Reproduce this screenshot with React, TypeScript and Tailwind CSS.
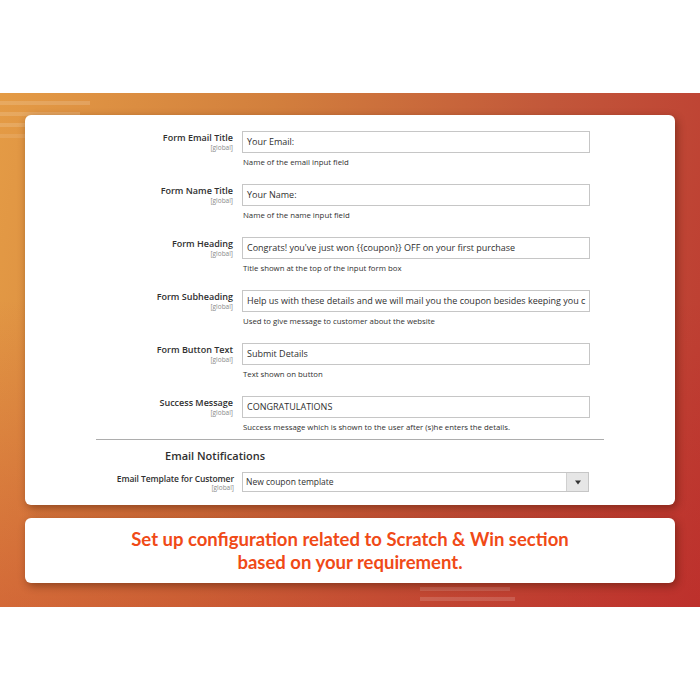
import React from "react";

const rows = [
  { label: "Form Email Title", value: "Your Email:", help: "Name of the email input field" },
  { label: "Form Name Title", value: "Your Name:", help: "Name of the name input field" },
  { label: "Form Heading", value: "Congrats! you've just won {{coupon}} OFF on your first purchase", help: "Title shown at the top of the input form box" },
  { label: "Form Subheading", value: "Help us with these details and we will mail you the coupon besides keeping you c", help: "Used to give message to customer about the website" },
  { label: "Form Button Text", value: "Submit Details", help: "Text shown on button" },
  { label: "Success Message", value: "CONGRATULATIONS", help: "Success message which is shown to the user after (s)he enters the details." },
];

export default function App() {
  return (
    <div className="w-[700px] h-[700px] bg-white overflow-hidden" style={{ fontFamily: "'Open Sans', 'Liberation Sans', sans-serif" }}>
      <div className="relative mt-[93px] h-[514px] bg-[linear-gradient(100deg,#e49b45_0%,#d27f3d_35%,#c2573a_70%,#bd3a31_100%)] px-[25px] pt-[22px] overflow-hidden">
        <div className="absolute inset-0 bg-[linear-gradient(180deg,rgba(0,0,0,0)_40%,rgba(190,30,35,0.35)_100%)]" />
        <div className="absolute left-0 top-[8px] flex flex-col gap-[7px]">
          <div className="h-[4px] w-[90px] bg-white/15" />
          <div className="h-[4px] w-[80px] bg-white/15" />
          <div className="h-[4px] w-[70px] bg-white/15" />
          <div className="h-[4px] w-[60px] bg-white/10" />
        </div>
        <div className="absolute left-[420px] bottom-[6px] flex flex-col gap-[6px]">
          <div className="h-[4px] w-[90px] bg-white/15" />
          <div className="h-[4px] w-[95px] bg-white/15" />
        </div>
        <div className="relative flex flex-col gap-[13px]">
          <div className="h-[390px] rounded-[6px] bg-white shadow-[2px_3px_8px_rgba(60,20,0,0.45)] pt-[16px]">
            {rows.map((r) => (
              <div key={r.label} className="flex h-[53px]">
                <div className="w-[209px] flex flex-col items-end pt-[1px] pr-[1px]">
                  <div className="text-[9px] leading-[12px] font-semibold text-[#303030]">{r.label}</div>
                  <div className="text-[6.5px] leading-[8px] text-[#8a8a8a]">[global]</div>
                </div>
                <div className="ml-[8px] w-[348px]">
                  <div className="h-[22px] border border-[#c6c6c6] flex items-center pl-[4px] overflow-hidden whitespace-nowrap text-[9px] text-[#303030]">
                    {r.value}
                  </div>
                  <div className="mt-[4px] text-[7.8px] leading-[10px] text-[#303030] pl-[1px]">{r.help}</div>
                </div>
              </div>
            ))}
            <div className="mx-[71px] mt-[-10px] border-t border-[#adadad]" />
            <div className="ml-[140px] mt-[9px] text-[11px] leading-[14px] font-semibold text-[#303030]">Email Notifications</div>
            <div className="flex mt-[9px]">
              <div className="w-[209px] flex flex-col items-end pt-[1px]">
                <div className="text-[8.5px] leading-[11px] font-semibold text-[#303030] tracking-[-0.1px]">Email Template for Customer</div>
                <div className="text-[6.5px] leading-[8px] text-[#8a8a8a]">[global]</div>
              </div>
              <div className="ml-[8px] w-[347px] h-[20px] border border-[#c6c6c6] flex">
                <div className="flex-1 flex items-center pl-[3px] text-[8.5px] text-[#303030]">New coupon template</div>
                <div className="w-[22px] bg-[#e6e6e6] border-l border-[#d0d0d0] flex items-center justify-center">
                  <svg width="6" height="5" viewBox="0 0 6 5"><path d="M0 0.5 H6 L3 4.5 Z" fill="#333" /></svg>
                </div>
              </div>
            </div>
          </div>
          <div className="h-[65px] rounded-[6px] bg-white shadow-[2px_3px_8px_rgba(60,20,0,0.45)] flex flex-col items-center justify-center">
            <div className="text-[18.5px] leading-[23px] font-bold text-[#f04a17] text-center" style={{ fontFamily: "Lato, 'Open Sans', sans-serif" }}>
              Set up configuration related to Scratch &amp; Win section
              <br />
              based on your requirement.
            </div>
          </div>
        </div>
      </div>
    </div>
  );
}
